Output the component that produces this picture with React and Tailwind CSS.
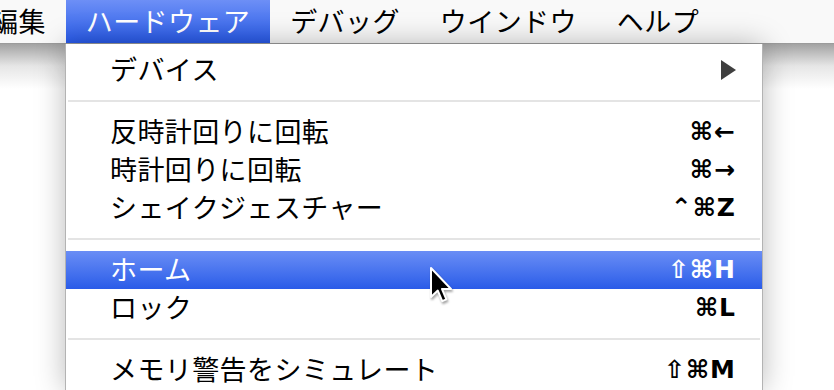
const menus = ["編集", "ハードウェア", "デバッグ", "ウインドウ", "ヘルプ"];

const items = [
  { label: "デバイス", arrow: true },
  { sep: true },
  { label: "反時計回りに回転", sc: "⌘←" },
  { label: "時計回りに回転", sc: "⌘→" },
  { label: "シェイクジェスチャー", sc: "⌃⌘Z" },
  { sep: true },
  { label: "ホーム", sc: "⇧⌘H", active: true },
  { label: "ロック", sc: "⌘L" },
  { sep: true },
  { label: "メモリ警告をシミュレート", sc: "⇧⌘M" },
];

const jp = { fontFamily: '"Noto Sans CJK JP", "Noto Sans", sans-serif' };
const sym = { fontFamily: '"DejaVu Sans", "Liberation Sans", sans-serif' };

const Cursor = () => (
  <svg width="24" height="38" viewBox="0 0 12 19" className="absolute left-[429px] top-[266px] drop-shadow-[1px_2px_1px_rgba(0,0,0,0.35)]">
    <path
      d="M1 1 L1 15.5 L4.4 12.3 L6.6 17.6 L8.7 16.7 L6.5 11.5 L11 11.5 Z"
      fill="#000"
      stroke="#fff"
      strokeWidth="1"
      strokeLinejoin="round"
    />
  </svg>
);

const App = () => {
  return (
    <div className="relative w-[834px] h-[390px] overflow-hidden bg-white flex flex-col" style={jp}>
      {/* Menu bar */}
      <div className="h-[44px] shrink-0 flex bg-[#f9f9f9] border-b border-[#9c9c9c] ml-[-29px] text-[27px] tracking-[0.4px] text-black">
        {menus.map((m) => (
          <div
            key={m}
            className={`h-full flex items-center px-5 pb-[2px] leading-none ${
              m === "ハードウェア" ? "bg-linear-to-b from-[#6d8ff6] to-[#2859e8] text-white" : ""
            }`}
          >
            {m}
          </div>
        ))}
      </div>

      {/* Area below the bar */}
      <div className="flex-1 bg-[linear-gradient(to_bottom,#a3a3a3,#e6e6e6_22px,#ffffff_45px)]">
        <div className="ml-[65px] w-[698px] h-full bg-white border-x border-[#b3b3b3] pt-[7px] shadow-[0_0_28px_rgba(0,0,0,0.28)]">
          {items.map((it, i) =>
            it.sep ? (
              <div key={i} className="h-[24px] flex items-center px-[2px]">
                <div className="h-[2px] w-full bg-[#e4e4e4]" />
              </div>
            ) : (
              <div
                key={i}
                className={`h-[38px] flex items-center justify-between pl-[44px] pr-[26px] pb-[4px] text-[27px] tracking-[0.4px] leading-none ${
                  it.active ? "bg-linear-to-b from-[#6a8df5] to-[#2a5be8] text-white" : "text-black"
                }`}
              >
                <span>{it.label}</span>
                {it.arrow ? (
                  <svg width="15" height="20" viewBox="0 0 15 20" className="mt-[4px]">
                    <path d="M0 0 L15 10 L0 20 Z" fill="#3f3f3f" />
                  </svg>
                ) : (
                  <span className="text-[25px] font-semibold tracking-[1px] mt-[3px]" style={sym}>
                    {it.sc}
                  </span>
                )}
              </div>
            )
          )}
        </div>
      </div>

      <Cursor />
    </div>
  );
};

export default App;
